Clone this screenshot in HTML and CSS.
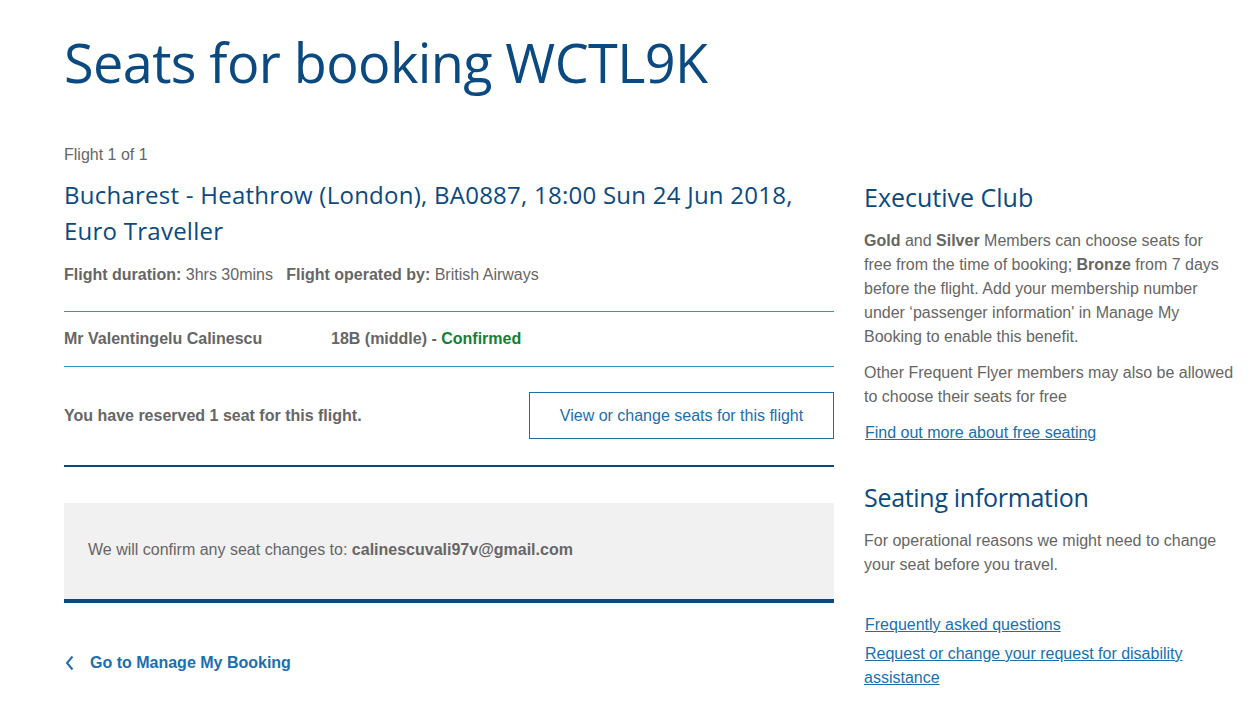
FILE: index.html
```html
<!DOCTYPE html>
<html lang="en">
<head>
<meta charset="utf-8">
<title>Seats for booking WCTL9K</title>
<link rel="stylesheet" href="styles.css">
</head>
<body>
<div class="page">
  <h1 class="title">Seats for booking WCTL9K</h1>
  <div class="layout">
    <main class="main">
      <p class="flight-count">Flight 1 of 1</p>
      <h2 class="route">Bucharest - Heathrow (London), BA0887, 18:00 Sun 24 Jun 2018, Euro Traveller</h2>
      <p class="meta"><b>Flight duration:</b> 3hrs 30mins &nbsp; <b>Flight operated by:</b> British Airways</p>
      <div class="passenger">
        <span class="pax-name">Mr Valentingelu Calinescu</span>
        <span class="pax-seat">18B (middle) - <span class="confirmed">Confirmed</span></span>
      </div>
      <div class="reserved">
        <span class="reserved-text">You have reserved 1 seat for this flight.</span>
        <a class="btn" href="#">View or change seats for this flight</a>
      </div>
      <div class="notice">We will confirm any seat changes to: <b>calinescuvali97v@gmail.com</b></div>
      <a class="back" href="#"><svg class="chev" width="10" height="16" viewBox="0 0 10 16"><path d="M8.5 1.5 L3 8 L8.5 14.5" fill="none" stroke="#1a6fae" stroke-width="2"/></svg>Go to Manage My Booking</a>
    </main>
    <aside class="side">
      <h3 class="side-h">Executive Club</h3>
      <p class="side-p"><b>Gold</b> and <b>Silver</b> Members can choose seats for free from the time of booking; <b>Bronze</b> from 7 days before the flight. Add your membership number under ‘passenger information' in Manage My Booking to enable this benefit.</p>
      <p class="side-p">Other Frequent Flyer members may also be allowed to choose their seats for free</p>
      <p class="side-link"><a href="#">Find out more about free seating</a></p>
      <h3 class="side-h second">Seating information</h3>
      <p class="side-p">For operational reasons we might need to change your seat before you travel.</p>
      <ul class="links">
        <li><a href="#">Frequently asked questions</a></li>
        <li><a href="#">Request or change your request for disability assistance</a></li>
      </ul>
    </aside>
  </div>
</div>
</body>
</html>
```
FILE: styles.css
```css
body {
  margin: 0;
  font-family: "Liberation Sans", Arial, sans-serif;
  font-size: 16px;
  color: #666;
  background: #fff;
}
.page {
  padding: 0 8px 0 64px;
}
.title {
  font-family: "Open Sans", sans-serif;
  font-weight: 400;
  font-size: 54px;
  line-height: 64px;
  color: #0b4a80;
  margin: 30px 0 51px;
  letter-spacing: -0.6px;
}
.layout {
  display: grid;
  grid-template-columns: 770px 370px;
  column-gap: 30px;
}
.flight-count {
  margin: 0 0 12px;
  line-height: 20px;
}
.route {
  font-family: "Open Sans", sans-serif;
  font-weight: 400;
  font-size: 24px;
  line-height: 36px;
  color: #0b4a80;
  margin: 0 0 16px;
  letter-spacing: 0.25px;
}
.meta {
  margin: 0 0 26px;
  line-height: 20px;
}
.meta b { color: #666; }
.passenger {
  border-top: 1px solid #2a96cf;
  border-bottom: 1px solid #2a96cf;
  height: 54px;
  display: flex;
  align-items: center;
  font-weight: bold;
}
.pax-name { width: 267px; }
.confirmed { color: #138034; }
.reserved {
  display: flex;
  justify-content: space-between;
  align-items: center;
  padding: 25px 0 26px;
  border-bottom: 2px solid #0b4a80;
}
.reserved-text { font-weight: bold; }
.btn {
  display: flex;
  align-items: center;
  justify-content: center;
  width: 303px;
  height: 45px;
  border: 1px solid #1a6fae;
  color: #1a6fae;
  text-decoration: none;
}
.notice {
  margin-top: 36px;
  background: #f1f1f1;
  border-bottom: 4px solid #0b4a80;
  padding: 37px 24px 39px;
  line-height: 20px;
}
.back {
  display: inline-flex;
  align-items: center;
  gap: 16px;
  margin-top: 50px;
  color: #1a6fae;
  font-weight: bold;
  text-decoration: none;
  line-height: 20px;
}
.side {
  padding-top: 36px;
}
.side-h {
  font-family: "Open Sans", sans-serif;
  font-weight: 400;
  font-size: 25px;
  line-height: 32px;
  color: #0b4a80;
  margin: 0 0 16px;
}
.side-h.second {
  margin-top: 36px;
  letter-spacing: -0.3px;
}
.side-p {
  margin: 0 0 12px;
  line-height: 24px;
}
.side-p b { color: #666; }
.side-link { margin: 0; line-height: 24px; }
a { color: #1a6fae; }
.side-link a, .links a { padding-left: 1px; }
.links {
  list-style: none;
  padding: 0;
  margin: 36px 0 0;
  line-height: 24px;
}
.links li { margin-bottom: 5px; }
```
